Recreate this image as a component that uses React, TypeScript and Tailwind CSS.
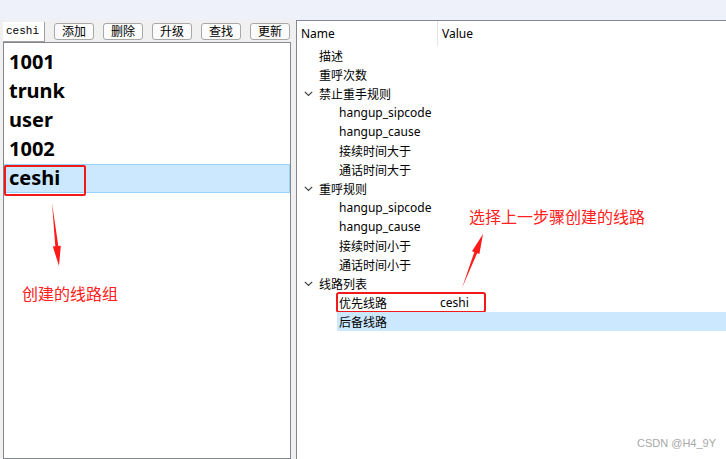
import React from "react";

const F = '"Noto Sans", "Noto Sans CJK SC", sans-serif';
const CJK = '"Noto Sans CJK SC", "Noto Sans", sans-serif';

function Chevron() {
  return (
    <svg width="9" height="6" viewBox="0 0 9 6" className="shrink-0">
      <path d="M0.8 0.8 L4.5 4.5 L8.2 0.8" fill="none" stroke="#404040" strokeWidth="1.2" />
    </svg>
  );
}

type Row = { label: string; level: 0 | 1; expander?: boolean; value?: string; selected?: boolean; boxed?: boolean };

const rows: Row[] = [
  { label: "描述", level: 0 },
  { label: "重呼次数", level: 0 },
  { label: "禁止重手规则", level: 0, expander: true },
  { label: "hangup_sipcode", level: 1 },
  { label: "hangup_cause", level: 1 },
  { label: "接续时间大于", level: 1 },
  { label: "通话时间大于", level: 1 },
  { label: "重呼规则", level: 0, expander: true },
  { label: "hangup_sipcode", level: 1 },
  { label: "hangup_cause", level: 1 },
  { label: "接续时间小于", level: 1 },
  { label: "通话时间小于", level: 1 },
  { label: "线路列表", level: 0, expander: true },
  { label: "优先线路", level: 1, value: "ceshi", boxed: true },
  { label: "后备线路", level: 1, selected: true },
];

const buttons = ["添加", "删除", "升级", "查找", "更新"];
const items = ["1001", "trunk", "user", "1002", "ceshi"];

export default function App() {
  return (
    <div className="relative w-[726px] h-[459px] overflow-hidden bg-[#f0f0f0] text-black" style={{ fontFamily: F }}>
      <div className="h-[20px] bg-[#eef1f9]" />
      <div className="flex h-[439px]">
        {/* left column */}
        <div className="w-[296px] shrink-0 flex flex-col pl-[3px]">
          <div className="flex items-center h-[22px] gap-[9px]">
            <div
              className="w-[42px] h-[20px] bg-white border-b border-r border-[#a0a0a0] text-[11px] leading-[19px] pl-[3px] mt-[1px]"
              style={{ fontFamily: '"Liberation Mono", monospace' }}
            >
              ceshi
            </div>
            {buttons.map((b) => (
              <div
                key={b}
                className="w-[40px] h-[17px] rounded-[3px] border border-[#a8a8a8] bg-[#fbfbfb] flex items-center justify-center text-[12px] leading-none"
                style={{ fontFamily: CJK }}
              >
                {b}
              </div>
            ))}
          </div>
          <div className="mt-[0px] w-[288px] flex-1 bg-white border border-[#828790] pt-[5px] flex flex-col">
            {items.map((it, i) => (
              <div
                key={it}
                className={
                  "relative h-[29px] flex items-center pl-[5px] text-[20px] font-bold leading-none " +
                  (i === 4 ? "bg-[#cce8ff] border border-[#99d1ff] -mx-[0px]" : "")
                }
                style={{ fontFamily: '"Noto Sans", sans-serif' }}
              >
                <span className={i === 4 ? "-ml-[1px] -mt-[2px]" : "-mt-[2px]"}>{it}</span>
                {i === 4 && (
                  <div className="absolute left-[-1px] top-[0px] w-[82px] h-[31px] border-2 border-[#f01a1a] rounded-[2px]" />
                )}
              </div>
            ))}
          </div>
        </div>

        {/* right panel */}
        <div className="flex-1 bg-white border-l border-t border-[#828790] flex flex-col">
          <div className="flex h-[25px] text-[12px] items-center">
            <div className="w-[141px] h-full flex items-center pl-[4px] border-r border-[#e5e5e5]">Name</div>
            <div className="pl-[4px]">Value</div>
          </div>
          <div className="flex flex-col text-[12px]">
            {rows.map((r, i) => (
              <div key={i} className="relative h-[19px] flex items-center">
                <div className="w-[22px] flex justify-center pl-[1px] shrink-0">{r.expander && <Chevron />}</div>
                <div
                  className={
                    "h-full flex items-center flex-1 " + (r.level === 1 ? "ml-[18px] pl-[2px] " : "") + (r.selected ? "bg-[#cce8ff]" : "")
                  }
                >
                  <span className="w-[101px] shrink-0" style={{ fontFamily: r.label.startsWith("hangup") ? F : CJK }}>
                    {r.label}
                  </span>
                  {r.value && <span style={{ fontFamily: F }}>{r.value}</span>}
                </div>
                {r.boxed && (
                  <div className="absolute left-[39px] top-[-1px] w-[150px] h-[21px] border-2 border-[#f01a1a] rounded-[3px]" />
                )}
              </div>
            ))}
          </div>
        </div>
      </div>

      {/* annotations */}
      <div className="absolute left-[22px] top-[283px] text-[16px] leading-[20px] text-[#ff2020]" style={{ fontFamily: CJK }}>
        创建的线路组
      </div>
      <div className="absolute left-[469px] top-[206px] text-[16px] leading-[20px] text-[#ff2020]" style={{ fontFamily: CJK }}>
        选择上一步骤创建的线路
      </div>
      <svg className="absolute left-0 top-0 pointer-events-none" width="726" height="459">
        <polygon points="52,203 58.3,245.9 60.8,245.7 59,266 52.8,246.5 55.3,246.3" fill="#ff1a1a" />
        <polygon points="462,288 477.1,253.2 479.4,254.1 483,234 472,251.2 474.3,252.2" fill="#ff1a1a" />
      </svg>
      <div className="absolute left-[637px] top-[436px] text-[11px] leading-[14px] text-[#a8a8a8]" style={{ fontFamily: '"Liberation Sans", sans-serif' }}>
        CSDN @H4_9Y
      </div>
    </div>
  );
}
